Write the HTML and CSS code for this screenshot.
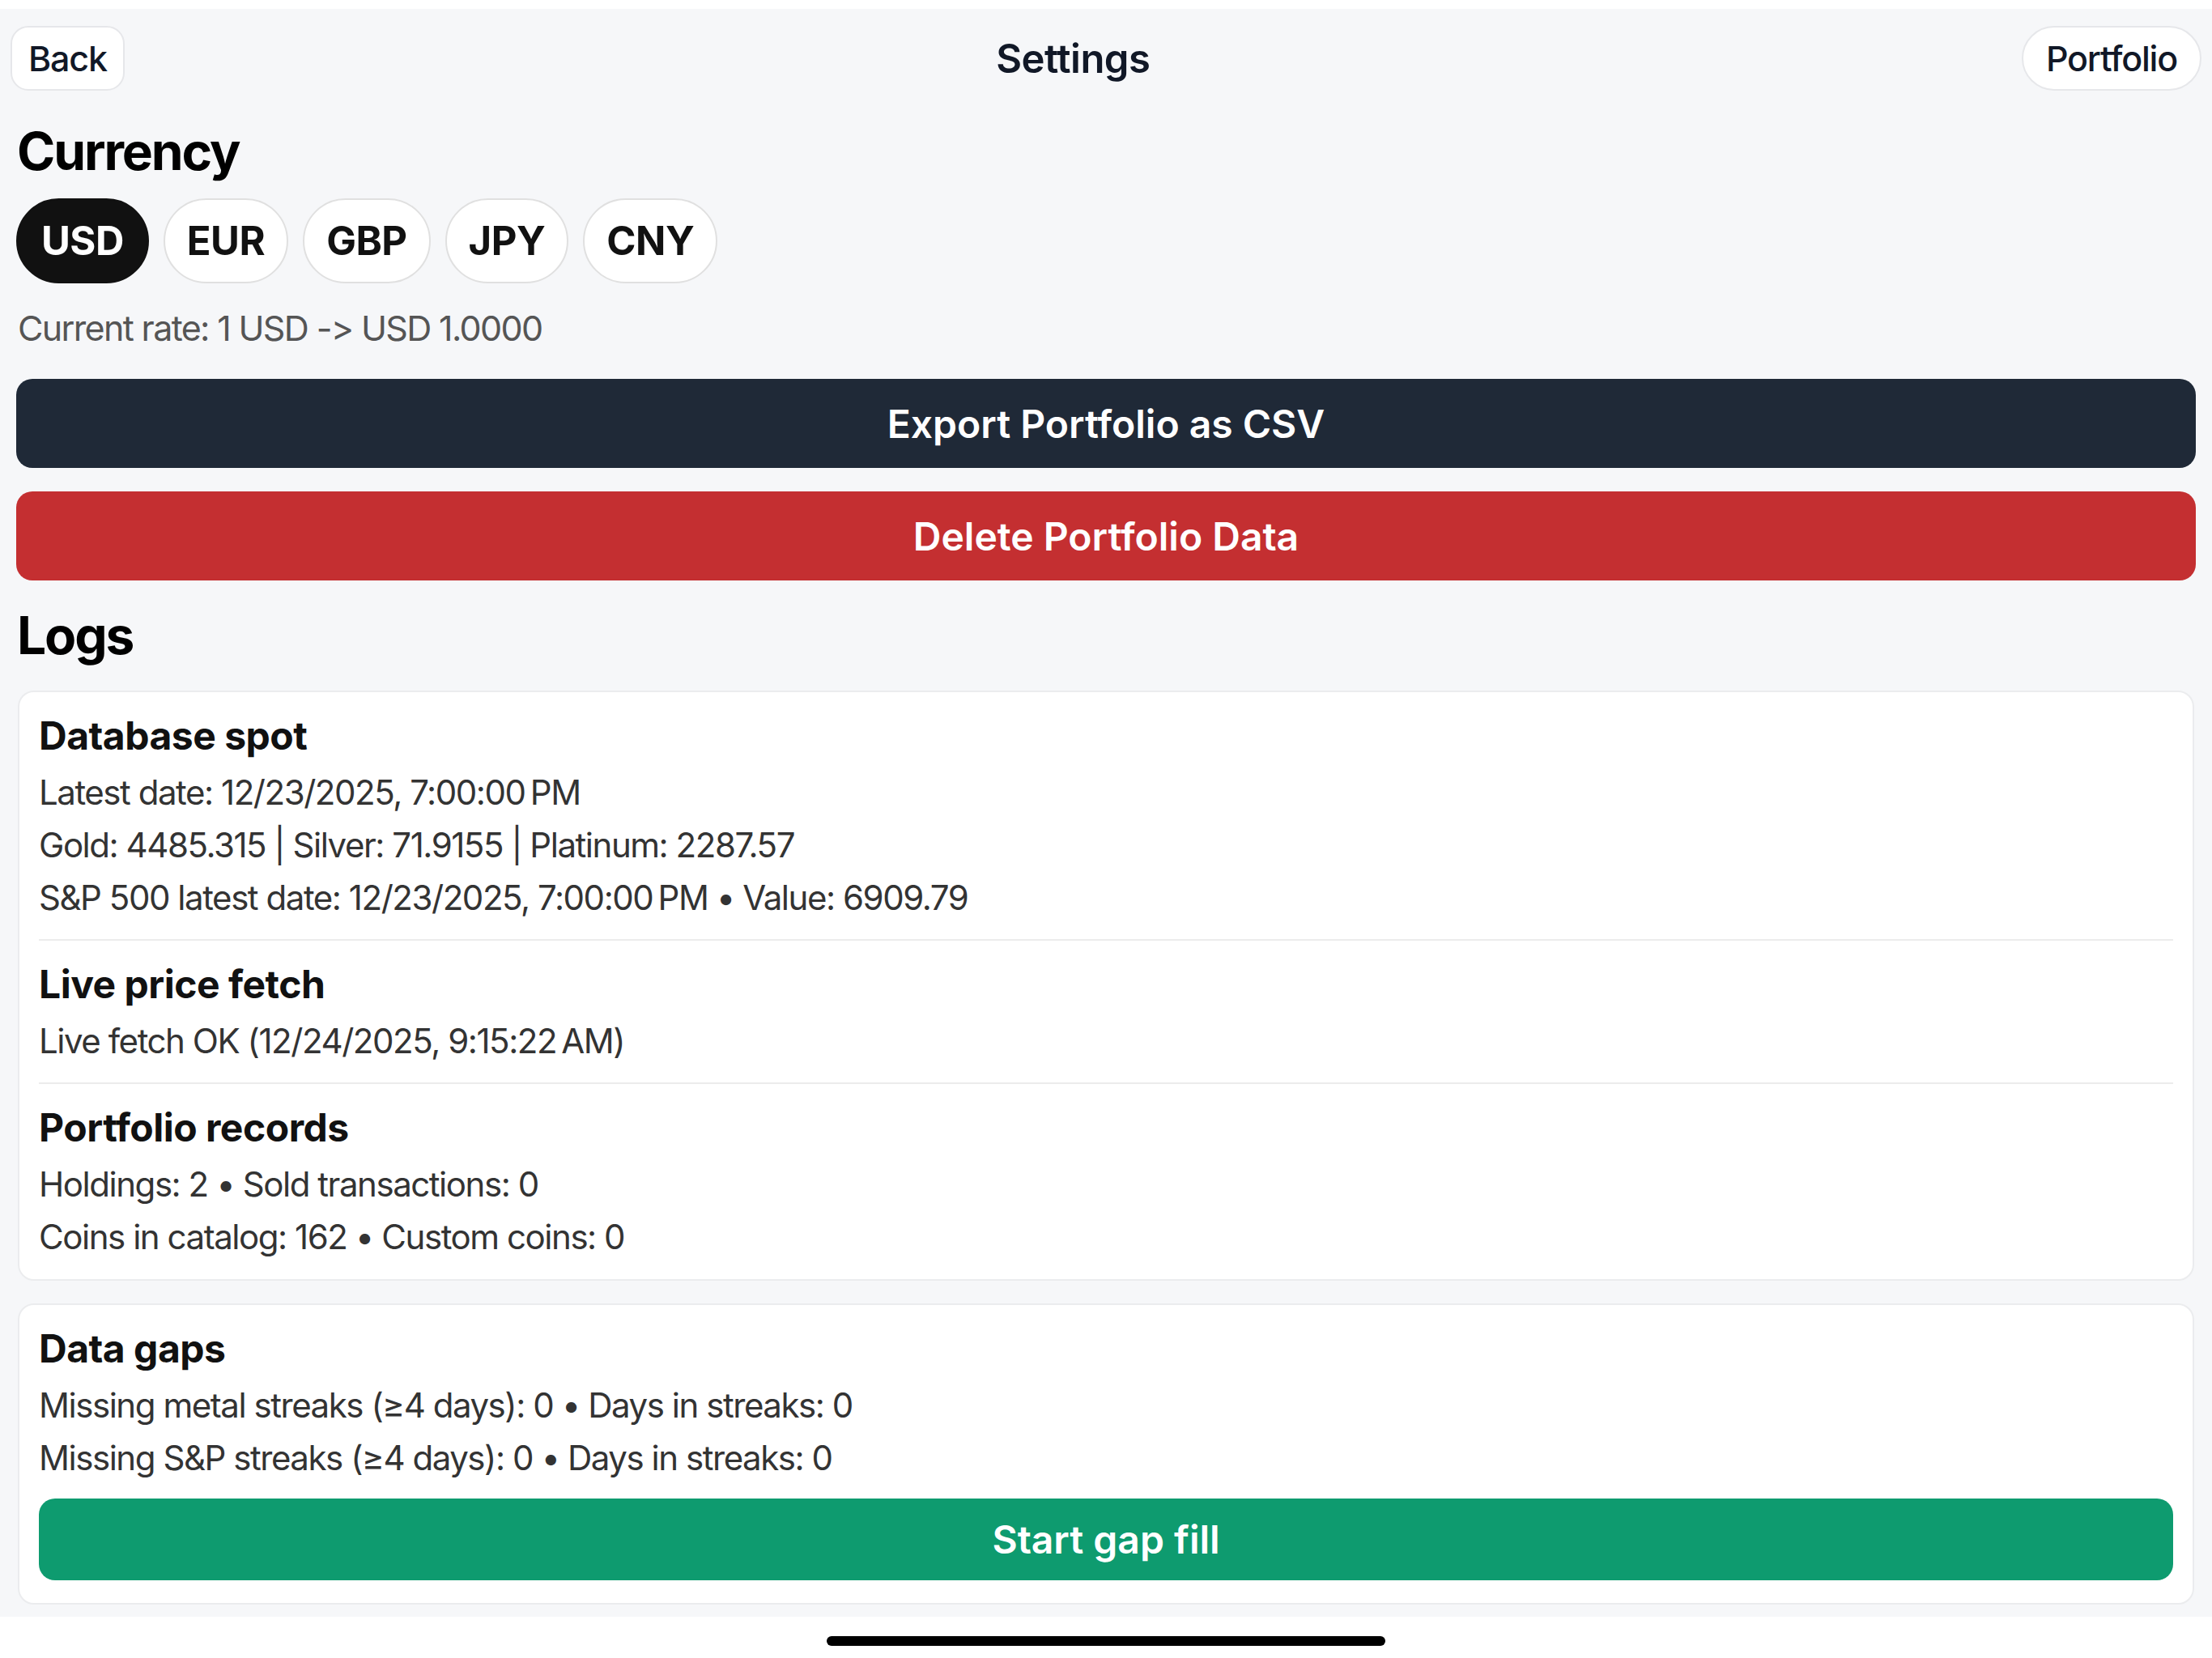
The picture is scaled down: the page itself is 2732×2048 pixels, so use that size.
FILE: index.html
```html
<!DOCTYPE html>
<html lang="en">
<head>
    <meta charset="UTF-8">
    <title>Settings</title>
    <link rel="stylesheet" href="styles.css">
</head>
<body>
    <div class="app">
        <div class="top-bar">
            <button class="nav-btn back-btn">Back</button>
            <div class="page-title">Settings</div>
            <button class="nav-btn portfolio-btn">Portfolio</button>
        </div>

        <h2 class="section-title">Currency</h2>
        <div class="chip-row">
            <button class="chip active">USD</button>
            <button class="chip">EUR</button>
            <button class="chip">GBP</button>
            <button class="chip">JPY</button>
            <button class="chip">CNY</button>
        </div>
        <p class="rate">Current rate: 1 USD -&gt; USD 1.0000</p>

        <button class="wide-btn export-btn">Export Portfolio as CSV</button>
        <button class="wide-btn delete-btn">Delete Portfolio Data</button>

        <h2 class="section-title logs-title">Logs</h2>

        <div class="card">
            <div class="log-section">
                <h3>Database spot</h3>
                <p>Latest date: 12/23/2025, 7:00:00&#8239;PM</p>
                <p>Gold: 4485.315 | Silver: 71.9155 | Platinum: 2287.57</p>
                <p>S&amp;P 500 latest date: 12/23/2025, 7:00:00&#8239;PM • Value: 6909.79</p>
            </div>
            <div class="log-section">
                <h3>Live price fetch</h3>
                <p>Live fetch OK (12/24/2025, 9:15:22&#8239;AM)</p>
            </div>
            <div class="log-section">
                <h3>Portfolio records</h3>
                <p>Holdings: 2 • Sold transactions: 0</p>
                <p>Coins in catalog: 162 • Custom coins: 0</p>
            </div>
        </div>

        <div class="card gaps-card">
            <div class="log-section">
                <h3>Data gaps</h3>
                <p>Missing metal streaks (≥4 days): 0 • Days in streaks: 0</p>
                <p>Missing S&amp;P streaks (≥4 days): 0 • Days in streaks: 0</p>
            </div>
            <button class="wide-btn gap-btn">Start gap fill</button>
        </div>
    </div>

    <div class="home-area">
        <div class="home-indicator"></div>
    </div>
</body>
</html>
```

FILE: styles.css
```css
/* Settings screen */
* {
    box-sizing: border-box;
}
body {
    margin: 0;
    background-color: #ffffff;
    font-family: "Inter", "Liberation Sans", sans-serif;
    color: #111111;
}
button {
    font-family: inherit;
    cursor: pointer;
}
.app {
    margin-top: 11px;
    height: 1986px;
    padding: 21px 20px 0 20px;
    background-color: #f6f7f9;
    overflow: hidden;
}
.top-bar {
    display: flex;
    align-items: center;
    margin: 0 -7px;
    height: 80px;
}
.nav-btn {
    height: 80px;
    background-color: #ffffff;
    border: 2px solid #e6e7ea;
    color: #111827;
    font-size: 43px;
    font-weight: 500;
    letter-spacing: -1.2px;
}
.back-btn {
    padding: 0 20px;
    border-radius: 22px;
}
.portfolio-btn {
    padding: 0 28px;
    border-radius: 40px;
}
.page-title {
    flex: 1;
    text-align: center;
    font-size: 49px;
    font-weight: 600;
    color: #111827;
    letter-spacing: -0.5px;
}
.section-title {
    margin: 37px 0 0 1px;
    font-size: 64px;
    line-height: 76px;
    font-weight: 700;
    letter-spacing: -2.1px;
    color: #000000;
}
.chip-row {
    display: flex;
    gap: 18px;
    margin-top: 20px;
}
.chip {
    height: 105px;
    padding: 0 27px;
    border-radius: 53px;
    border: 2px solid #e0e0e0;
    background-color: #ffffff;
    color: #111111;
    font-size: 49px;
    font-weight: 700;
    letter-spacing: -0.5px;
}
.chip.active {
    padding: 0 29px;
    background-color: #111111;
    border-color: #111111;
    color: #ffffff;
}
.rate {
    margin: 29px 0 0 2px;
    font-size: 43px;
    line-height: 52px;
    color: #555555;
    letter-spacing: -1.65px;
}
.wide-btn {
    display: block;
    width: 100%;
    height: 110px;
    border: none;
    border-radius: 20px;
    color: #ffffff;
    font-size: 48px;
    font-weight: 600;
    letter-spacing: 0;
}
.export-btn {
    margin-top: 37px;
    background-color: #1f2937;
}
.delete-btn {
    margin-top: 29px;
    background-color: #c42f31;
}
.logs-title {
    margin-top: 30px;
}
.card {
    margin: 30px 2px 0 2px;
    background-color: #ffffff;
    border: 2px solid #ebecee;
    border-radius: 20px;
    padding: 0 24px;
}
.log-section {
    padding: 25px 0 19px 0;
    border-bottom: 2px solid #ececec;
}
.log-section:last-child {
    border-bottom: none;
    padding-bottom: 20px;
}
.log-section h3 {
    margin: 0 0 8px 0;
    font-size: 48px;
    line-height: 58px;
    font-weight: 700;
    letter-spacing: -0.5px;
    color: #111111;
}
.log-section p {
    margin: 0;
    font-size: 42px;
    line-height: 65px;
    color: #333333;
    letter-spacing: -1.45px;
}
.gaps-card {
    margin-top: 28px;
    padding-bottom: 28px;
}
.gaps-card .log-section {
    border-bottom: none;
    padding-bottom: 18px;
}
.gap-btn {
    height: 101px;
    background-color: #0e9b6f;
}
.home-area {
    height: 51px;
    display: flex;
    justify-content: center;
    padding-top: 24px;
}
.home-indicator {
    width: 690px;
    height: 12px;
    border-radius: 6px;
    background-color: #000000;
}
```
